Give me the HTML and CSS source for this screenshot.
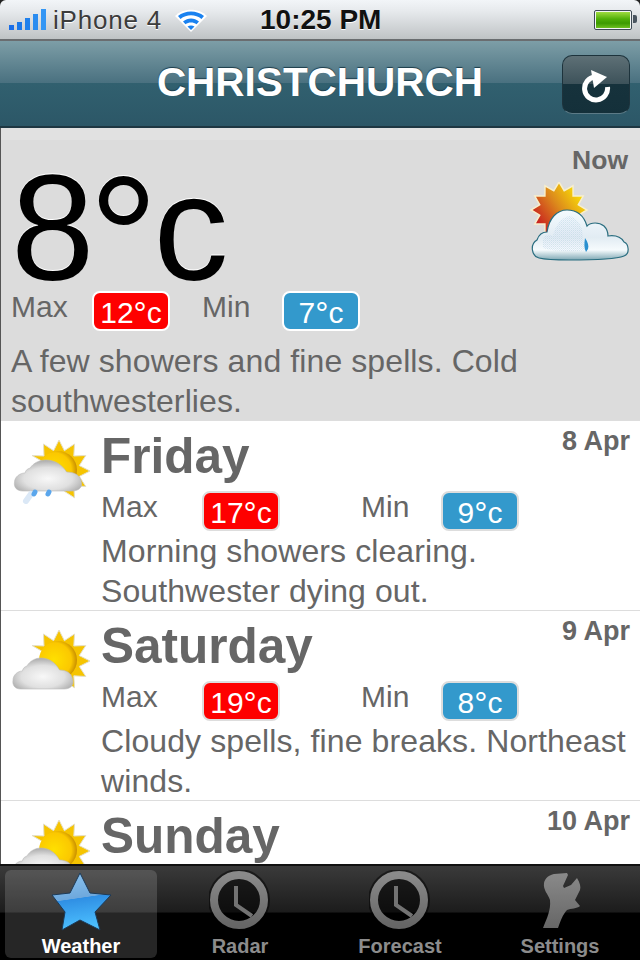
FILE: index.html
```html
<!DOCTYPE html>
<html>
  <head>
    <title>Weather</title>
    <meta charset="UTF-8">
    <link rel="stylesheet" href="styles.css">
  </head>
  <body>
    <svg class="defs" width="0" height="0">
      <defs>
        <radialGradient id="sunfill" cx="0.4" cy="0.5" r="0.6">
          <stop offset="0" stop-color="#ffe000"/>
          <stop offset="0.75" stop-color="#fbc800"/>
          <stop offset="1" stop-color="#c88e00"/>
        </radialGradient>
        <radialGradient id="cloudfill" cx="0.5" cy="0.6" r="0.6">
          <stop offset="0" stop-color="#f8f8f8"/>
          <stop offset="0.6" stop-color="#e0e0e0"/>
          <stop offset="1" stop-color="#aaa"/>
        </radialGradient>
        <linearGradient id="hotsun" x1="0" y1="0.8" x2="1" y2="0.1">
          <stop offset="0.1" stop-color="#c81e20"/>
          <stop offset="0.5" stop-color="#dc8a1c"/>
          <stop offset="0.85" stop-color="#f8d808"/>
        </linearGradient>
        <linearGradient id="nowcloud" x1="0" y1="0" x2="0" y2="1">
          <stop offset="0" stop-color="#f4fbff"/>
          <stop offset="0.55" stop-color="#e2ecf3"/>
          <stop offset="0.8" stop-color="#f6fbfd"/>
          <stop offset="1" stop-color="#7fa8b4"/>
        </linearGradient>
        <pattern id="dither" width="2" height="2" patternUnits="userSpaceOnUse">
          <rect width="1" height="1" fill="#a9c8dc"/>
          <rect x="1" y="1" width="1" height="1" fill="#c4d6f0"/>
        </pattern>
        <linearGradient id="starfill" x1="0.15" y1="0" x2="0.3" y2="1">
          <stop offset="0" stop-color="#8cc4f0"/>
          <stop offset="0.47" stop-color="#6ea8dc"/>
          <stop offset="0.48" stop-color="#2f8fe4"/>
          <stop offset="1" stop-color="#4cc0ff"/>
        </linearGradient>
        <linearGradient id="tabgray" x1="0" y1="0" x2="0" y2="1">
          <stop offset="0" stop-color="#8a8a8a"/>
          <stop offset="1" stop-color="#666"/>
        </linearGradient>
        <symbol id="sun" viewBox="0 0 90 90">
          <polygon fill="#f6c400" stroke="#e4dfc8" stroke-width="1" points="31,35.500 43,36 42.500,24 52.600,30.700 58,20 63.400,30.700 73.500,24 72.800,36 84.800,35.500 78.300,45.600 89,51 78.300,56.400 84.800,66.500 72.800,65.800 73.500,77.800 63.400,71.300 58,51"/>
          <circle cx="57" cy="50" r="19" fill="url(#sunfill)"/>
        </symbol>
        <symbol id="cloud" viewBox="0 0 90 90">
          <path d="M22 72c-6 0-9-4-8-9 0-5 5-9 10-9 1-3 2-4 5-5 3-5 9-8 15-8 9 0 16 5 20 12 7 0 13 3 14 9 2 6-2 10-9 10z" fill="url(#cloudfill)" stroke="#bbb" stroke-width="0.6"/>
        </symbol>
        <symbol id="clock" viewBox="3 3 62 62">
          <circle cx="33" cy="33" r="31" fill="#000" opacity="0.5"/>
          <circle cx="33" cy="33" r="25" fill="none" stroke="url(#tabgray)" stroke-width="8"/>
          <path d="M30 19v19l16 11" fill="none" stroke="#737373" stroke-width="4"/>
        </symbol>
      </defs>
    </svg>

    <div class="phone">
      <div class="statusbar">
        <div class="status-left">
          <svg class="signal" width="38" height="22" viewBox="0 0 38 22">
            <rect x="0" y="16" width="5" height="5" fill="#1a6ee8"/>
            <rect x="8" y="13" width="5" height="8" fill="#1a78ea"/>
            <rect x="16" y="9" width="5" height="12" fill="#1f80ec"/>
            <rect x="24" y="5" width="5" height="16" fill="#2a8cf0"/>
            <rect x="32" y="0" width="5" height="21" fill="#3396f4"/>
          </svg>
          <span class="carrier">iPhone 4</span>
          <svg class="wifi" width="32" height="24" viewBox="0 0 32 24">
            <path d="M16 24L0 8c8-8.500 24-8.500 32 0z" fill="#fff"/>
            <path d="M3 8c7-6 19-6 26 0l-2.500 3c-6-5-15-5-21 0z" fill="#1a82f0"/>
            <path d="M8 13.500c5-4 11-4 16 0l-2.500 2.800c-3-2.500-8-2.500-11 0z" fill="#1a82f0"/>
            <path d="M12.500 18.500c2-1.500 5-1.500 7 0l-3.500 3.500z" fill="#1a82f0"/>
          </svg>
        </div>
        <span class="clock-text">10:25 PM</span>
        <div class="battery"><div class="battery-fill"></div></div>
      </div>

      <div class="navbar">
        <h1 class="city">CHRISTCHURCH</h1>
        <div class="refresh">
          <svg width="36" height="36" viewBox="0 0 36 36">
            <path d="M17 10A11.500 11.500 0 1 0 29.500 20" fill="none" stroke="#fff" stroke-width="5"/>
            <polygon points="13,3 29,10 16,21" fill="#fff"/>
          </svg>
        </div>
      </div>

      <div class="content">
        <section class="now">
          <div class="now-top">
            <div class="big-temp">8<span class="deg">°</span>c</div>
            <div class="now-side">
              <div class="now-label">Now</div>
              <svg class="now-icon" width="102" height="80" viewBox="0 0 102 80">
                <polygon points="58,28 49.300,33.200 54.200,42 44.100,42.100 44,52.200 35.200,47.300 30,56 24.800,47.300 16,52.200 15.900,42.100 5.800,42 10.700,33.200 2,28 10.700,22.800 5.800,14 15.900,13.900 16,3.800 24.800,8.700 30,0 35.200,8.700 44,3.800 44.100,13.900 54.200,14 49.300,22.800" fill="url(#hotsun)" stroke="#f8efcc" stroke-width="1.500"/>
                <path d="M10 76C2 74 1 62 8 58c2-6 6-8 10-8 2-14 10-22 20-22s17 6 20 16c4-4 12-4 17 0 3 3 4 6 4 10 7-1 13 1 16 6 5 2 6 12 0 14-10 4-35 4-55 4-12 0-22 0-30-2z" fill="url(#nowcloud)" stroke="#2a6e80" stroke-width="1.200"/>
                <path d="M14 58c2-6 6-6 10-4 2-10 8-18 16-20 10 2 14 12 14 22l2 12c-10 2-30 2-42-2z" fill="url(#dither)" opacity="0.4"/>
                <path d="M56 56c3 4 4 8 3 11l-2 3c-2-4-2-8-1-14z" fill="#2a90d0"/>
              </svg>
            </div>
          </div>
          <div class="temps temps-now">
            <span class="temp-label">Max</span>
            <span class="badge badge-max">12<span class="deg">°</span>c</span>
            <span class="temp-label">Min</span>
            <span class="badge badge-min">7<span class="deg">°</span>c</span>
          </div>
          <p class="desc">A few showers and fine spells. Cold southwesterlies.</p>
        </section>

        <section class="day">
          <svg class="day-icon" width="90" height="90" viewBox="0 0 90 90">
            <use href="#sun"/>
            <use href="#cloud" transform="translate(-1 -1) scale(1.040 1)"/>
            <path d="M30 74l-5 7" stroke="#dbe8f6" stroke-width="6" stroke-linecap="round"/>
            <path d="M34 72l-1 2M48 72l-1 2" stroke="#5aa6ec" stroke-width="5" stroke-linecap="round"/>
          </svg>
          <div class="day-body">
            <div class="day-head">
              <h2 class="day-name">Friday</h2>
              <span class="day-date">8 Apr</span>
            </div>
            <div class="temps temps-day">
              <span class="temp-label">Max</span>
              <span class="badge badge-max">17<span class="deg">°</span>c</span>
              <span class="temp-label">Min</span>
              <span class="badge badge-min">9<span class="deg">°</span>c</span>
            </div>
            <p class="desc">Morning showers clearing. Southwester dying out.</p>
          </div>
        </section>

        <section class="day">
          <svg class="day-icon" width="90" height="90" viewBox="0 0 90 90">
            <use href="#sun"/>
            <use href="#cloud" transform="translate(-1 7) scale(0.930 1)"/>
          </svg>
          <div class="day-body">
            <div class="day-head">
              <h2 class="day-name">Saturday</h2>
              <span class="day-date">9 Apr</span>
            </div>
            <div class="temps temps-day">
              <span class="temp-label">Max</span>
              <span class="badge badge-max">19<span class="deg">°</span>c</span>
              <span class="temp-label">Min</span>
              <span class="badge badge-min">8<span class="deg">°</span>c</span>
            </div>
            <p class="desc">Cloudy spells, fine breaks. Northeast winds.</p>
          </div>
        </section>

        <section class="day">
          <svg class="day-icon" width="90" height="90" viewBox="0 0 90 90">
            <use href="#sun"/>
            <use href="#cloud" transform="translate(-1 7) scale(0.930 1)"/>
          </svg>
          <div class="day-body">
            <div class="day-head">
              <h2 class="day-name">Sunday</h2>
              <span class="day-date">10 Apr</span>
            </div>
          </div>
        </section>
      </div>

      <nav class="tabbar">
        <div class="tab tab-active">
          <svg class="tab-icon" width="64" height="62" viewBox="0 0 64 62">
            <polygon points="31,3 41,23 62,25 46,42 51,60 31,50 13,60 16,42 3,25 21,23" fill="url(#starfill)" stroke="#1c3a58" stroke-width="1"/>
          </svg>
          <span class="tab-label">Weather</span>
        </div>
        <div class="tab">
          <svg class="tab-icon" width="62" height="62" viewBox="0 0 62 62"><use href="#clock"/></svg>
          <span class="tab-label">Radar</span>
        </div>
        <div class="tab">
          <svg class="tab-icon" width="62" height="62" viewBox="0 0 62 62"><use href="#clock"/></svg>
          <span class="tab-label">Forecast</span>
        </div>
        <div class="tab">
          <svg class="tab-icon" width="66" height="62" viewBox="0 0 66 62">
            <path d="M16 58c4-10 8-18 7-28-2-6-7-10-6-17 1-5 5-8 10-9l13-1 1 2-5 11 1 2 7-3 6-7c3 5 4 9 3 12l-5 10 5 6c-3 3-9 2-13 4-4 4-7 12-9 18z" fill="url(#tabgray)"/>
          </svg>
          <span class="tab-label">Settings</span>
        </div>
      </nav>
    </div>
  </body>
</html>
```
FILE: styles.css
```css
html, body {
  height: 100%;
  width: 100%;
}
body {
  margin: 0;
  background: #222;
  font-family: "Liberation Sans", Arial, sans-serif;
  overflow: hidden;
}
.defs {
  position: absolute;
}
.phone {
  display: flex;
  flex-direction: column;
  width: 640px;
  height: 960px;
  overflow: hidden;
}

/* status bar */
.statusbar {
  display: flex;
  align-items: center;
  justify-content: space-between;
  flex: none;
  height: 38px;
  padding: 1px 8px 0 9px;
  background: linear-gradient(#f2f5f8, #e6e9ec 30%, #bfc3c5);
  border-bottom: 2px solid #6a6d70;
  border-radius: 6px 6px 0 0;
}
.status-left {
  display: flex;
  align-items: center;
  width: 220px;
}
.signal {
  margin-right: 6px;
}
.carrier {
  font-size: 26px;
  color: #3c3c3c;
  letter-spacing: 0.8px;
  text-shadow: 0 1px 0 #fff;
}
.wifi {
  margin-left: 13px;
}
.clock-text {
  flex: 1;
  font-size: 28px;
  font-weight: bold;
  color: #111;
  margin-left: 31px;
  text-shadow: 0 1px 0 #fff;
}
.battery {
  position: relative;
  width: 34px;
  height: 16px;
  padding: 1px;
  background: #f4f6f6;
  border: 1px solid #3e4a55;
  border-radius: 2px;
}
.battery::after {
  content: "";
  position: absolute;
  right: -6px;
  top: 4px;
  width: 4px;
  height: 8px;
  background: #4a5560;
  border-radius: 0 2px 2px 0;
}
.battery-fill {
  height: 100%;
  background: linear-gradient(#9fdc40, #4fae08 45%, #3c9a00 70%, #6cc020);
}

/* nav */
.navbar {
  display: flex;
  align-items: center;
  justify-content: center;
  position: relative;
  flex: none;
  height: 85px;
  background: linear-gradient(#7d9ea7, #4a7180 49%, #31606f 50%, #2c5767);
  border-bottom: 2px solid #1e3742;
}
.city {
  margin: -3px 0 0;
  font-size: 40.500px;
  font-weight: bold;
  color: #fff;
  text-shadow: 0 -1px 1px #1c3c4a;
}
.refresh {
  display: flex;
  align-items: center;
  justify-content: center;
  position: absolute;
  top: 14px;
  right: 10px;
  width: 66px;
  height: 57px;
  background: linear-gradient(#5e7076, #3d525a 49%, #16323c 50%, #14303a);
  border: 1px solid #1d333c;
  border-bottom-color: #5c7a86;
  border-radius: 10px;
}

/* list */
.content {
  flex: 1;
  min-height: 0;
  overflow: hidden;
  border-left: 1px solid #555;
}
.now {
  height: 292px;
  box-sizing: border-box;
  padding: 0 0 0 10px;
  background: linear-gradient(#e1e1e1 12px, #dcdcdc 12px);
  color: #666;
}
.now-top {
  display: flex;
  justify-content: space-between;
  height: 163px;
}
.big-temp {
  font-size: 150px;
  line-height: 110px;
  margin-top: 45px;
  color: #000;
  text-shadow: 0 -1px 0 #fff;
}
/* the ring is bigger and lower than the font's own degree sign */
.deg {
  font-size: 1.100em;
  line-height: 0.600;
  vertical-align: -0.060em;
}
.big-temp .deg {
  font-size: 175px;
  vertical-align: -18px;
  letter-spacing: -5px;
  margin-left: -6px;
}
.now-side {
  display: flex;
  flex-direction: column;
  align-items: flex-end;
  padding: 17px 12px 0 0;
}
.now-label {
  font-size: 26.500px;
  font-weight: bold;
  color: #666;
  margin-bottom: 6px;
}
.now-icon {
  margin-right: -3px;
}
.temps {
  display: flex;
  align-items: flex-start;
}
.temp-label {
  font-size: 30px;
  line-height: 32px;
  color: #666;
}
.badge {
  box-sizing: border-box;
  width: 78px;
  height: 40px;
  border: 2px solid #fff;
  border-radius: 8px;
  font-size: 30px;
  line-height: 40px;
  text-align: center;
  color: #fff;
}
.badge-max {
  background: #fe0000;
}
.badge-min {
  background: #3399cc;
}
.temps-now {
  height: 50px;
}
.temps-now .temp-label {
  width: 81px;
}
.temps-now .temp-label:nth-child(3) {
  width: 80px;
}
.temps-now .badge-max {
  margin-right: 32px;
}
.desc {
  margin: 0;
  font-size: 32px;
  line-height: 40px;
  letter-spacing: 0.1px;
  color: #666;
}
.day {
  display: flex;
  height: 190px;
  background: #fff;
  box-shadow: inset 0 1px 0 #ddd;
}
.day:first-of-type {
  box-shadow: none;
}
.day-icon {
  flex: none;
  width: 90px;
  height: 90px;
  margin-right: 10px;
  filter: blur(0.7px);
}
.day-body {
  flex: 1;
  min-width: 0;
  padding-right: 10px;
}
.day-head {
  display: flex;
  justify-content: space-between;
  align-items: flex-start;
  height: 71px;
}
.day-name {
  margin: 8px 0 0;
  font-size: 49.500px;
  line-height: 56px;
  color: #666;
}
.day-date {
  margin-top: 6px;
  font-size: 27px;
  font-weight: bold;
  line-height: 30px;
  color: #666;
}
.temps-day {
  height: 40px;
}
.temps-day .temp-label {
  width: 101px;
}
.temps-day .badge {
  border-color: #ddd;
}
.temps-day .badge-max {
  margin-right: 81px;
}
.temps-day .temp-label:nth-child(3) {
  width: 80px;
}

/* tabs */
.tabbar {
  display: grid;
  grid-template-columns: repeat(4, 160px);
  flex: none;
  height: 94px;
  background: linear-gradient(#3a3a3a, #1c1c1c 49%, #000 50%);
  border-top: 2px solid #111;
}
.tab {
  display: flex;
  flex-direction: column;
  align-items: center;
  margin: 4px 4px 3px;
  border-radius: 6px;
}
.tab-active {
  margin: 4px 3px 3px 5px;
  background: rgba(255, 255, 255, 0.15);
}
.tab-icon {
  filter: blur(0.4px);
}
.tab-label {
  font-size: 20px;
  font-weight: bold;
  color: #8c8c8c;
  margin-top: 3px;
}
.tab-active .tab-label {
  color: #fff;
}
```
